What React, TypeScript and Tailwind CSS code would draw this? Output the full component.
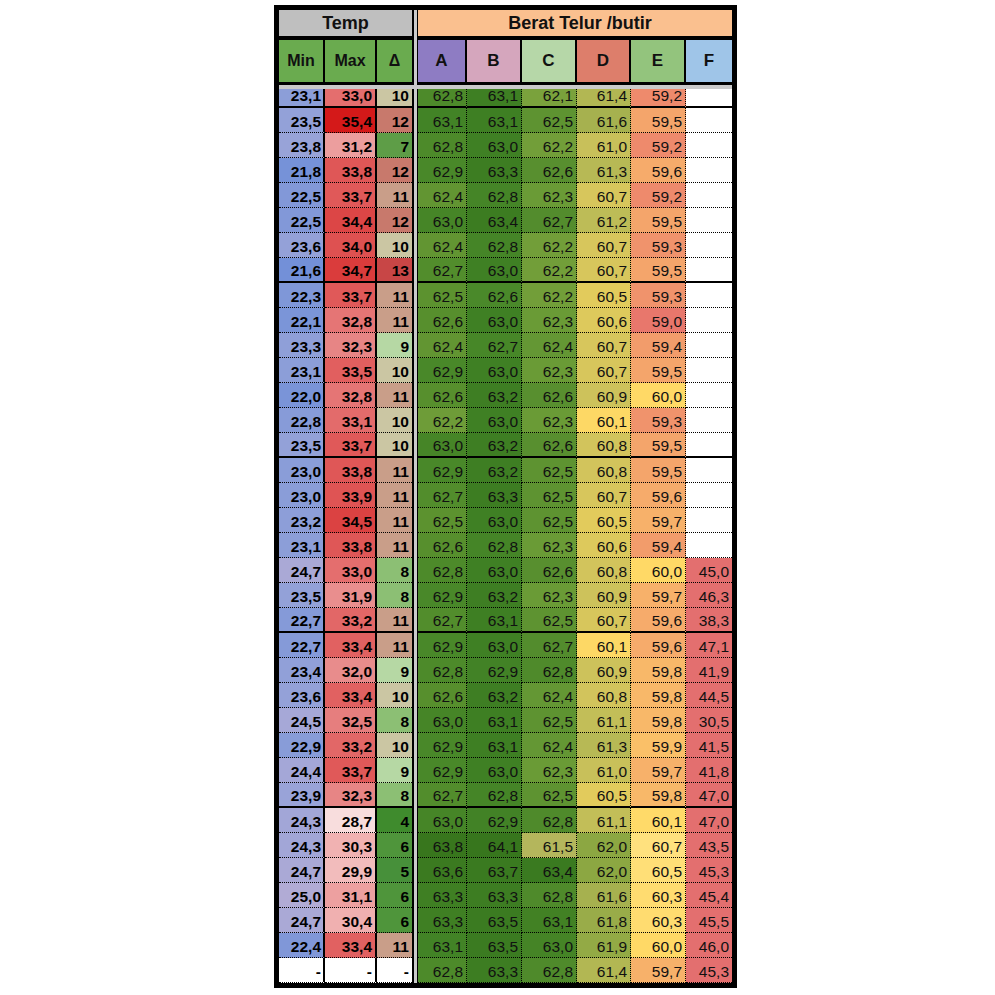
import React from "react";

type Row = [string, string, string, string, string, string, string, string, string | null];

const rows: Row[] = [
  ["23,1", "33,0", "10", "62,8", "63,1", "62,1", "61,4", "59,2", null],
  ["23,5", "35,4", "12", "63,1", "63,1", "62,5", "61,6", "59,5", null],
  ["23,8", "31,2", "7", "62,8", "63,0", "62,2", "61,0", "59,2", null],
  ["21,8", "33,8", "12", "62,9", "63,3", "62,6", "61,3", "59,6", null],
  ["22,5", "33,7", "11", "62,4", "62,8", "62,3", "60,7", "59,2", null],
  ["22,5", "34,4", "12", "63,0", "63,4", "62,7", "61,2", "59,5", null],
  ["23,6", "34,0", "10", "62,4", "62,8", "62,2", "60,7", "59,3", null],
  ["21,6", "34,7", "13", "62,7", "63,0", "62,2", "60,7", "59,5", null],
  ["22,3", "33,7", "11", "62,5", "62,6", "62,2", "60,5", "59,3", null],
  ["22,1", "32,8", "11", "62,6", "63,0", "62,3", "60,6", "59,0", null],
  ["23,3", "32,3", "9", "62,4", "62,7", "62,4", "60,7", "59,4", null],
  ["23,1", "33,5", "10", "62,9", "63,0", "62,3", "60,7", "59,5", null],
  ["22,0", "32,8", "11", "62,6", "63,2", "62,6", "60,9", "60,0", null],
  ["22,8", "33,1", "10", "62,2", "63,0", "62,3", "60,1", "59,3", null],
  ["23,5", "33,7", "10", "63,0", "63,2", "62,6", "60,8", "59,5", null],
  ["23,0", "33,8", "11", "62,9", "63,2", "62,5", "60,8", "59,5", null],
  ["23,0", "33,9", "11", "62,7", "63,3", "62,5", "60,7", "59,6", null],
  ["23,2", "34,5", "11", "62,5", "63,0", "62,5", "60,5", "59,7", null],
  ["23,1", "33,8", "11", "62,6", "62,8", "62,3", "60,6", "59,4", null],
  ["24,7", "33,0", "8", "62,8", "63,0", "62,6", "60,8", "60,0", "45,0"],
  ["23,5", "31,9", "8", "62,9", "63,2", "62,3", "60,9", "59,7", "46,3"],
  ["22,7", "33,2", "11", "62,7", "63,1", "62,5", "60,7", "59,6", "38,3"],
  ["22,7", "33,4", "11", "62,9", "63,0", "62,7", "60,1", "59,6", "47,1"],
  ["23,4", "32,0", "9", "62,8", "62,9", "62,8", "60,9", "59,8", "41,9"],
  ["23,6", "33,4", "10", "62,6", "63,2", "62,4", "60,8", "59,8", "44,5"],
  ["24,5", "32,5", "8", "63,0", "63,1", "62,5", "61,1", "59,8", "30,5"],
  ["22,9", "33,2", "10", "62,9", "63,1", "62,4", "61,3", "59,9", "41,5"],
  ["24,4", "33,7", "9", "62,9", "63,0", "62,3", "61,0", "59,7", "41,8"],
  ["23,9", "32,3", "8", "62,7", "62,8", "62,5", "60,5", "59,8", "47,0"],
  ["24,3", "28,7", "4", "63,0", "62,9", "62,8", "61,1", "60,1", "47,0"],
  ["24,3", "30,3", "6", "63,8", "64,1", "61,5", "62,0", "60,7", "43,5"],
  ["24,7", "29,9", "5", "63,6", "63,7", "63,4", "62,0", "60,5", "45,3"],
  ["25,0", "31,1", "6", "63,3", "63,3", "62,8", "61,6", "60,3", "45,4"],
  ["24,7", "30,4", "6", "63,3", "63,5", "63,1", "61,8", "60,3", "45,5"],
  ["22,4", "33,4", "11", "63,1", "63,5", "63,0", "61,9", "60,0", "46,0"],
  ["-", "-", "-", "62,8", "63,3", "62,8", "61,4", "59,7", "45,3"],
];

const groupEnds = new Set([0, 7, 14, 21, 28]);

type Stop = [number, string];

function hexToRgb(h: string): [number, number, number] {
  const n = parseInt(h.slice(1), 16);
  return [(n >> 16) & 255, (n >> 8) & 255, n & 255];
}

function scale(v: number, stops: Stop[]): string {
  if (v <= stops[0][0]) return stops[0][1];
  if (v >= stops[stops.length - 1][0]) return stops[stops.length - 1][1];
  for (let i = 0; i < stops.length - 1; i++) {
    const [a, ca] = stops[i];
    const [b, cb] = stops[i + 1];
    if (v >= a && v <= b) {
      const t = (v - a) / (b - a);
      const x = hexToRgb(ca);
      const y = hexToRgb(cb);
      const r = Math.round(x[0] + (y[0] - x[0]) * t);
      const g = Math.round(x[1] + (y[1] - x[1]) * t);
      const bl = Math.round(x[2] + (y[2] - x[2]) * t);
      return `rgb(${r},${g},${bl})`;
    }
  }
  return stops[0][1];
}

const num = (s: string) => parseFloat(s.replace(",", "."));

const minStops: Stop[] = [
  [21.6, "#7390d8"],
  [23.0, "#8a9dd8"],
  [24.0, "#9ba4d8"],
  [25.0, "#b1abd5"],
];
const maxStops: Stop[] = [
  [28.7, "#f8dddd"],
  [30.0, "#f2b9b9"],
  [31.2, "#ec9e9e"],
  [32.3, "#e78585"],
  [33.3, "#e26464"],
  [34.2, "#dd4c4c"],
  [34.7, "#da3c3c"],
  [35.4, "#d41919"],
];
const deltaStops: Stop[] = [
  [4, "#3f8b2d"],
  [5, "#47903a"],
  [6, "#4f953b"],
  [7, "#5e9d47"],
  [8, "#8cbf74"],
  [9, "#b6d8a4"],
  [10, "#cbc6a3"],
  [11, "#c99e89"],
  [12, "#c8796c"],
  [13, "#c84646"],
];
const colStops: Stop[][] = [
  [
    [62.2, "#6e9c38"],
    [62.5, "#5c922f"],
    [62.8, "#4d8a2a"],
    [63.1, "#428326"],
    [63.8, "#38761d"],
  ],
  [
    [62.6, "#4a892a"],
    [63.0, "#3f8024"],
    [64.1, "#37761d"],
  ],
  [
    [61.5, "#b4b65c"],
    [62.1, "#7aa23c"],
    [62.3, "#6a9b36"],
    [62.6, "#588f2f"],
    [63.0, "#458426"],
    [63.4, "#3a7a20"],
  ],
  [
    [60.1, "#fdd865"],
    [60.5, "#e2cb5c"],
    [60.8, "#d2c45c"],
    [61.2, "#bdbc57"],
    [61.6, "#a6b14f"],
    [62.0, "#8ca742"],
  ],
  [
    [59.0, "#e8776c"],
    [59.2, "#ee8a6c"],
    [59.5, "#f4a56b"],
    [59.7, "#f7b16a"],
    [59.9, "#fac068"],
    [60.0, "#ffd966"],
    [60.7, "#ffe17e"],
  ],
];

const tempW = ["w-[46px]", "w-[52px]", "w-[35px]"];
const tempPad = ["pr-[2px]", "pr-[3px]", "pr-[3px]"];
const tempRight = ["border-r-2", "border-r-2", ""];
const beratW = ["w-[49px]", "w-[55px]", "w-[55px]", "w-[54px]", "w-[55px]", "w-[46px]"];

function Sep() {
  return <div className="w-[6px] shrink-0 self-stretch border-l-2 border-r border-black bg-[#cacaca]" />;
}

function BodyRow({ r, i }: { r: Row; i: number }) {
  const thick = groupEnds.has(i);
  const h = i === 0 ? "h-[19px]" : "h-[25px]";
  const bottom = thick ? "border-b-2" : "border-b [border-bottom-style:dotted]";
  return (
    <div className={`flex ${h}`}>
      {[0, 1, 2].map((c) => {
        const s = r[c] as string;
        let bg = "#ffffff";
        if (s !== "-") {
          const v = num(s);
          bg = c === 0 ? scale(v, minStops) : c === 1 ? scale(v, maxStops) : scale(v, deltaStops);
        }
        return (
          <div
            key={c}
            className={`${tempW[c]} ${tempRight[c]} ${tempPad[c]} ${bottom} shrink-0 overflow-hidden border-black flex items-end justify-end pb-[3px] font-bold text-[15.5px] leading-[15px] text-black`}
            style={{ backgroundColor: bg }}
          >
            {s}
          </div>
        );
      })}
      <Sep />
      {[3, 4, 5, 6, 7, 8].map((c, k) => {
        const s = r[c];
        let bg = "#ffffff";
        if (s) {
          bg = k === 5 ? "#e36f6f" : scale(num(s), colStops[k]);
        }
        const right = k === 5 ? "" : "border-r [border-right-style:dotted]";
        return (
          <div
            key={c}
            className={`${beratW[k]} ${right} ${bottom} shrink-0 overflow-hidden border-black flex items-end justify-end pr-[3px] pb-[3px] text-[15.5px] leading-[15px] text-[#111]`}
            style={{ backgroundColor: bg }}
          >
            {s ?? ""}
          </div>
        );
      })}
    </div>
  );
}

export default function App() {
  return (
    <div className="w-[995px] h-[995px] bg-white pl-[274px] pt-[5px] font-['Liberation_Sans',Arial,sans-serif]">
      <div className="w-[463px] border-[5px] border-black bg-black flex flex-col">
        {/* header row 1 */}
        <div className="flex h-[30px]">
          <div className="w-[133px] shrink-0 border-b-4 border-black bg-[#bfbfbf] flex items-center justify-center font-bold text-[18px] leading-[18px] text-[#111]">
            Temp
          </div>
          <Sep />
          <div className="w-[314px] shrink-0 border-b-4 border-black bg-[#fac08f] flex items-center justify-center pl-[10px] font-bold text-[18px] leading-[18px] text-[#111]">
            Berat Telur /butir
          </div>
        </div>
        {/* header row 2 */}
        <div className="flex h-[45px]">
          <div className="w-[46px] shrink-0 border-r-2 border-b-[3px] border-black bg-[#6aab4f] flex items-center justify-center font-bold text-[16px] text-[#111]">
            Min
          </div>
          <div className="w-[52px] shrink-0 border-r-2 border-b-[3px] border-black bg-[#6aab4f] flex items-center justify-center font-bold text-[16px] text-[#111]">
            Max
          </div>
          <div className="w-[35px] shrink-0 border-b-[3px] border-black bg-[#6aab4f] flex items-center justify-center font-bold text-[16px] text-[#111]">
            Δ
          </div>
          <Sep />
          <div className="w-[49px] shrink-0 border-r-2 border-b-[3px] border-black bg-[#8e7cc3] flex items-center justify-center font-bold text-[17px] text-[#111]">
            A
          </div>
          <div className="w-[55px] shrink-0 border-r-2 border-b-[3px] border-black bg-[#d5a6bd] flex items-center justify-center font-bold text-[17px] text-[#111]">
            B
          </div>
          <div className="w-[55px] shrink-0 border-r-2 border-b-[3px] border-black bg-[#b6d7a8] flex items-center justify-center font-bold text-[17px] text-[#111]">
            C
          </div>
          <div className="w-[54px] shrink-0 border-r-2 border-b-[3px] border-black bg-[#dd7e6b] flex items-center justify-center font-bold text-[17px] text-[#111]">
            D
          </div>
          <div className="w-[55px] shrink-0 border-r-2 border-b-[3px] border-black bg-[#93c47d] flex items-center justify-center font-bold text-[17px] text-[#111]">
            E
          </div>
          <div className="w-[46px] shrink-0 border-b-[3px] border-black bg-[#9fc5e8] flex items-center justify-center font-bold text-[17px] text-[#111]">
            F
          </div>
        </div>
        {/* freeze line */}
        <div className="h-[4px] bg-[#cacaca]" />
        {rows.map((r, i) => (
          <BodyRow key={i} r={r} i={i} />
        ))}
      </div>
    </div>
  );
}
